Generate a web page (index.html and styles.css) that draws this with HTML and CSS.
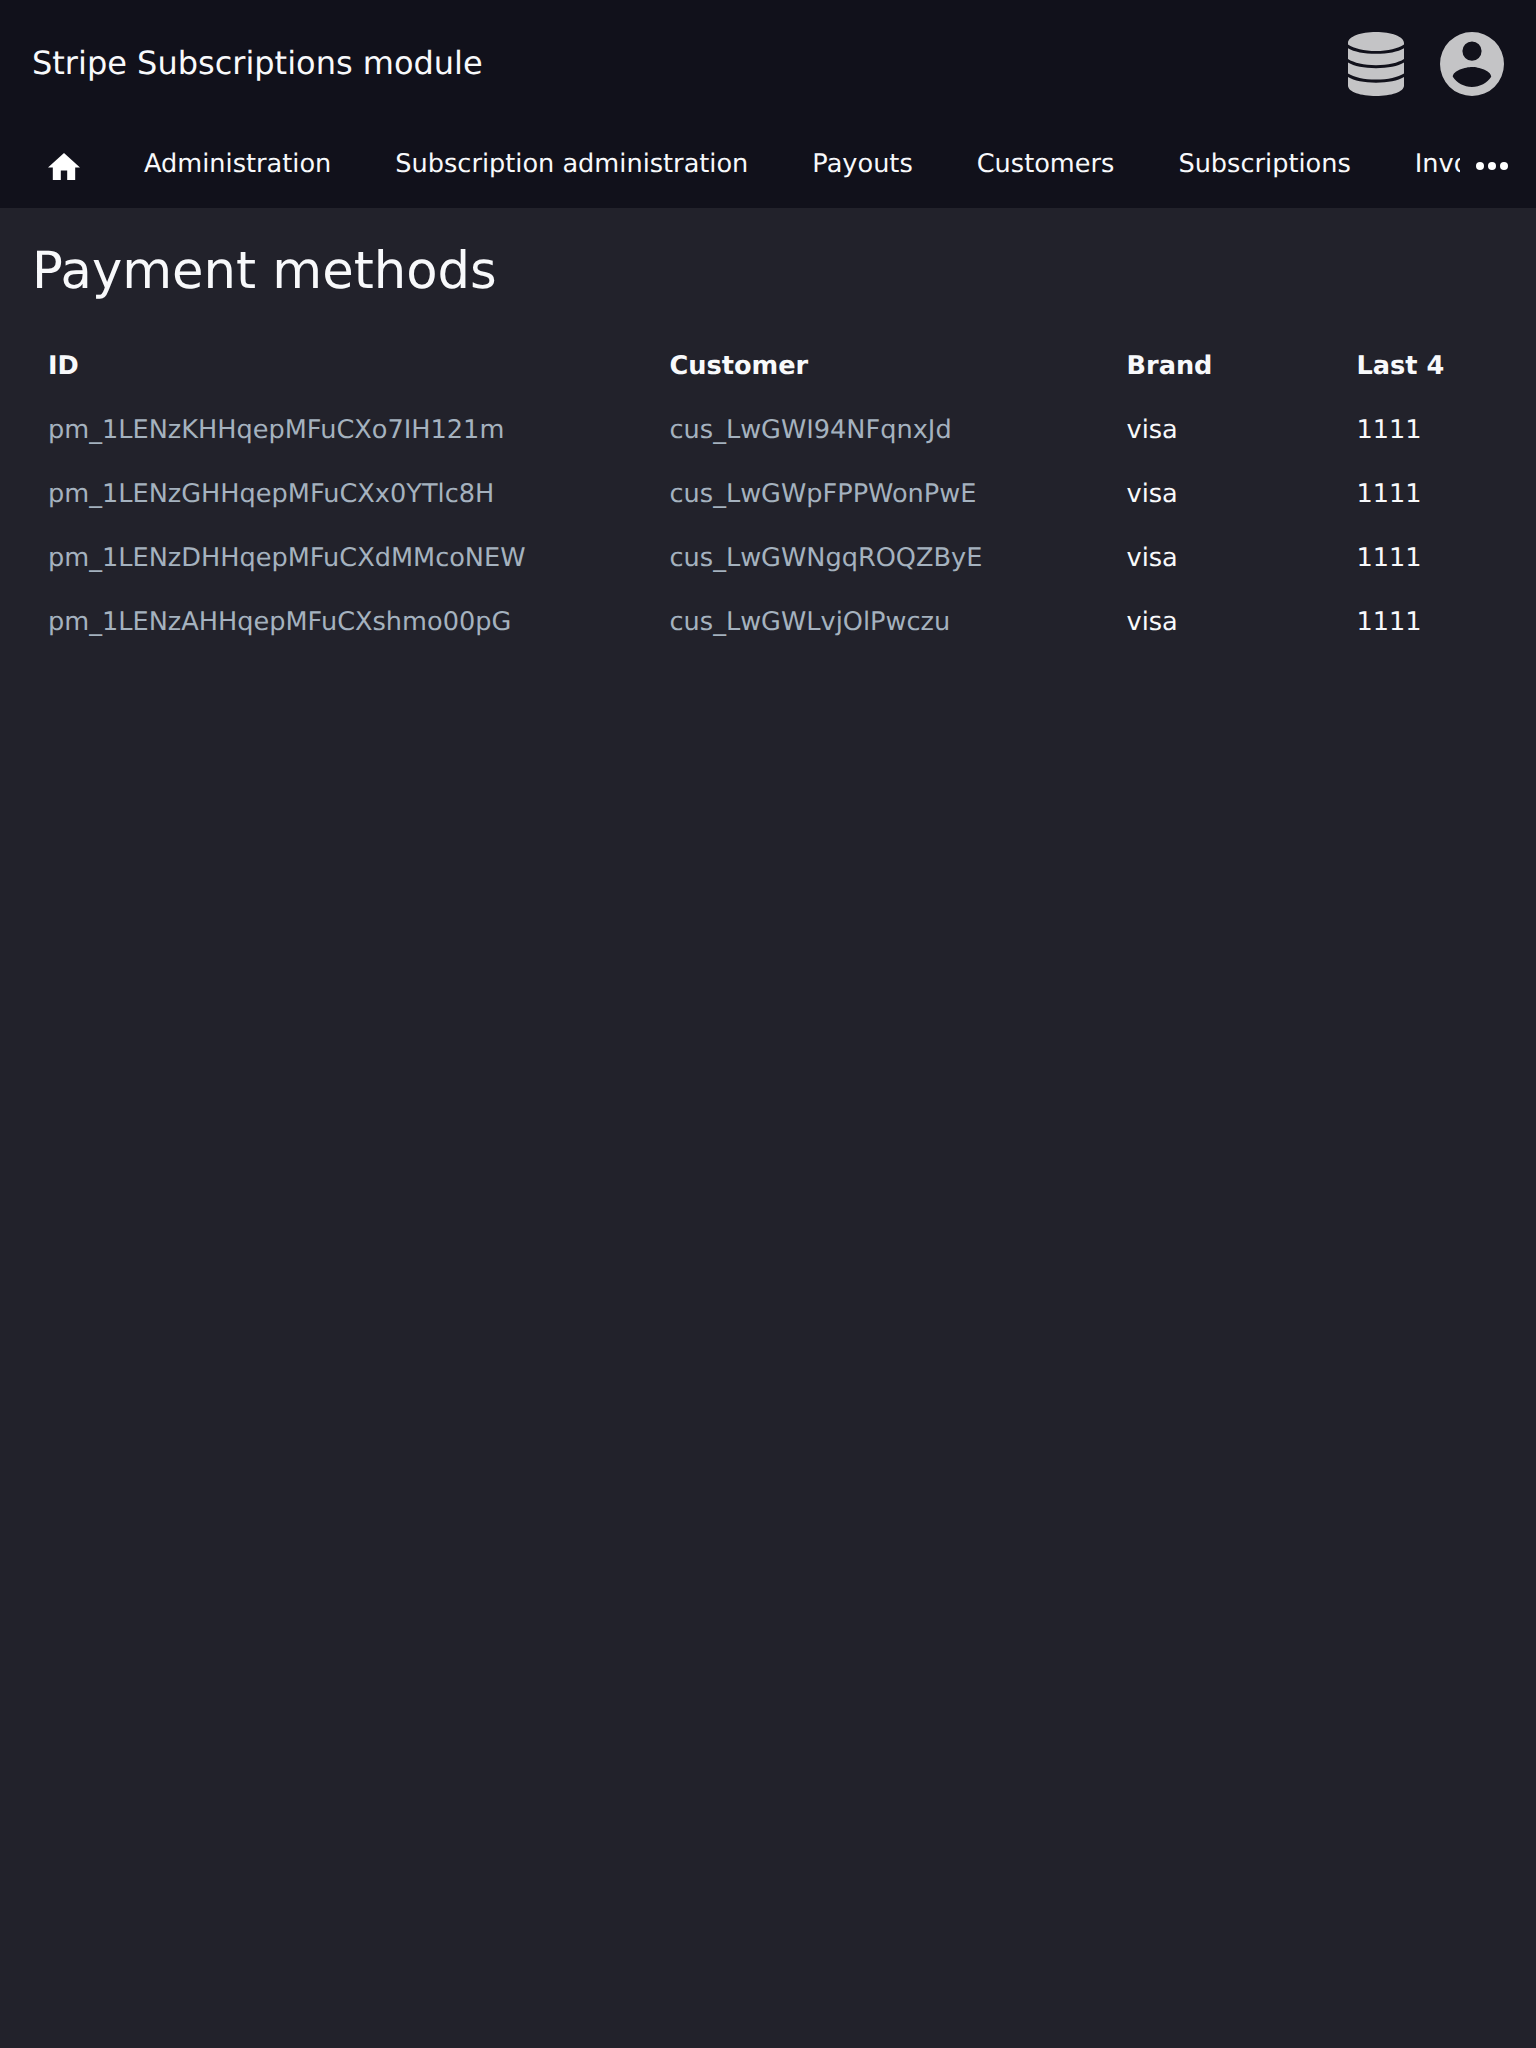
FILE: index.html
```html
<!DOCTYPE html>
<html lang="en">
<head>
<meta charset="utf-8">
<title>Payment methods</title>
<link rel="stylesheet" href="styles.css">
</head>
<body>
<header class="header">
  <div class="topbar">
    <div class="brand">Stripe Subscriptions module</div>
    <div class="actions">
      <svg class="icon-database" viewBox="0 0 56 64"><path d="M28 0C43 0 56 4.500 56 11v1.500C50 16.500 40 19 28 19S6 16.500 0 12.500V11C0 4.500 13 0 28 0zM0 16.200C6 19.800 16 21.800 28 21.800s22-2 28-5.600v10.900C50 31 40 33.200 28 33.200S6 31 0 27.100zM0 30.600C6 34.200 16 36.300 28 36.300s22-2.100 28-5.700v10.900C50 45.300 40 47.600 28 47.600S6 45.300 0 41.500zM0 45C6 48.600 16 50.700 28 50.700s22-2.100 28-5.700v8.500C56 60 43 64 28 64S0 60 0 53.500z"/></svg>
      <svg class="icon-account" viewBox="0 0 64 64"><path fill-rule="evenodd" d="M32 0a32 32 0 1 1 0 64a32 32 0 0 1 0-64zM32 9.500a9.600 9.600 0 1 0 0 19.200a9.600 9.600 0 0 0 0-19.200zM32 34.900c-6.400 0-19.200 3.500-19.200 9.900c4.100 6.200 11.200 10.200 19.200 10.200s15.100-4 19.200-10.200c0-6.400-12.800-9.900-19.200-9.900z"/></svg>
    </div>
  </div>
  <nav class="nav">
    <div class="nav-items">
      <a class="nav-link"><svg class="icon-home" viewBox="2 3 20 17"><path d="M10 20v-6h4v6h5v-8h3L12 3 2 12h3v8z"/></svg></a>
      <a class="nav-link">Administration</a>
      <a class="nav-link">Subscription administration</a>
      <a class="nav-link">Payouts</a>
      <a class="nav-link">Customers</a>
      <a class="nav-link">Subscriptions</a>
      <a class="nav-link">Invoices</a>
    </div>
    <svg class="icon-more" viewBox="0 0 32 8"><circle cx="4" cy="4" r="4"/><circle cx="16" cy="4" r="4"/><circle cx="28" cy="4" r="4"/></svg>
  </nav>
</header>
<main class="content">
  <h1 class="title">Payment methods</h1>
  <table class="table">
    <thead><tr><th class="col-id">ID</th><th class="col-customer">Customer</th><th class="col-brand">Brand</th><th>Last 4</th></tr></thead>
    <tbody>
      <tr><td><a class="link">pm_1LENzKHHqepMFuCXo7IH121m</a></td><td><a class="link">cus_LwGWI94NFqnxJd</a></td><td>visa</td><td>1111</td></tr>
      <tr><td><a class="link">pm_1LENzGHHqepMFuCXx0YTlc8H</a></td><td><a class="link">cus_LwGWpFPPWonPwE</a></td><td>visa</td><td>1111</td></tr>
      <tr><td><a class="link">pm_1LENzDHHqepMFuCXdMMcoNEW</a></td><td><a class="link">cus_LwGWNgqROQZByE</a></td><td>visa</td><td>1111</td></tr>
      <tr><td><a class="link">pm_1LENzAHHqepMFuCXshmo00pG</a></td><td><a class="link">cus_LwGWLvjOlPwczu</a></td><td>visa</td><td>1111</td></tr>
    </tbody>
  </table>
</main>
</body>
</html>
```
FILE: styles.css
```css
* { box-sizing: border-box; }
body {
  margin: 0;
  min-height: 2048px;
  background: #22222b;
  color: #f8f9fb;
  font: 25.6px/32px "DejaVu Sans", sans-serif;
  text-rendering: geometricPrecision;
}
.header { height: 208px; background: #11111b; }
.topbar {
  display: flex;
  justify-content: space-between;
  align-items: center;
  height: 128px;
  padding: 0 32px;
}
.brand { padding-bottom: 2px; font-size: 32px; line-height: 40px; }
.actions { display: flex; gap: 36px; fill: #c4c4c6; }
.icon-database { width: 56px; height: 64px; }
.icon-account { width: 64px; height: 64px; }
.nav { display: flex; height: 80px; padding-left: 16px; padding-right: 28px; }
.nav-items { display: flex; flex: 1; min-width: 0; overflow: hidden; }
.nav-link { flex: none; padding: 20px 32px 0; white-space: nowrap; }
.icon-home { display: block; width: 32px; height: 27.2px; margin-top: 4.6px; fill: #fff; }
.icon-more { width: 32px; height: 8px; margin: 34px 0 0 16px; fill: #fff; }
.content { padding: 33px 32px 32px; }
.title { margin: 0 0 33px; font-size: 51.2px; font-weight: 400; line-height: 60px; }
.table { width: 100%; border-collapse: collapse; table-layout: fixed; }
.table th, .table td { height: 64px; padding: 0 16px; text-align: left; }
.col-id { width: 621.5px; }
.col-customer { width: 457px; }
.col-brand { width: 230px; }
.link { color: #a5b2bf; }
```
